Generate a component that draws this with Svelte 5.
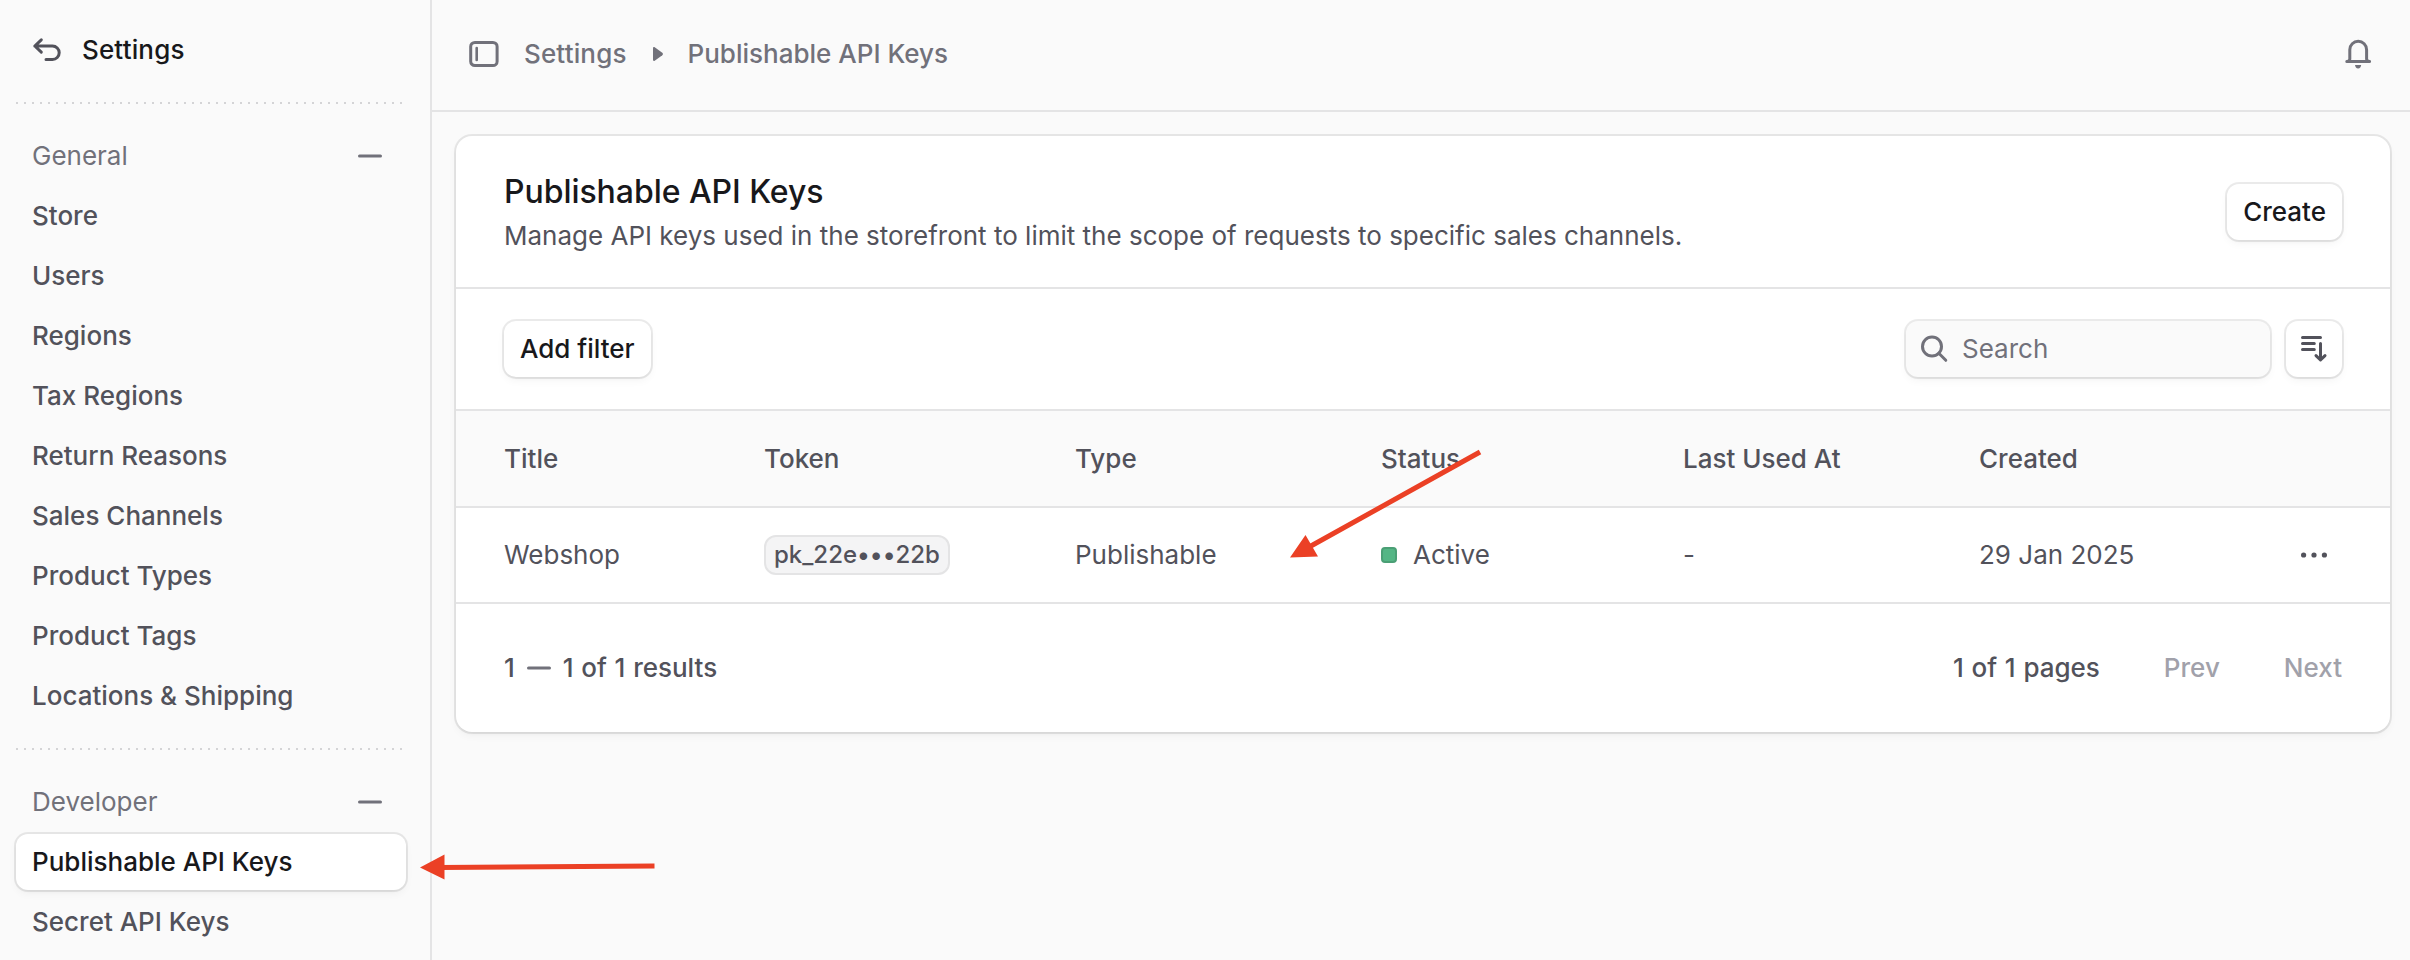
<script>
	const general = [
		"Store",
		"Users",
		"Regions",
		"Tax Regions",
		"Return Reasons",
		"Sales Channels",
		"Product Types",
		"Product Tags",
		"Locations & Shipping"
	];
	const developer = ["Publishable API Keys", "Secret API Keys"];

	const groups = [
		{ label: "General", items: general },
		{ label: "Developer", items: developer }
	];

	const columns = ["Title", "Token", "Type", "Status", "Last Used At", "Created"];

	const keys = [
		{
			title: "Webshop",
			token: "pk_22e•••22b",
			type: "Publishable",
			status: "Active",
			lastUsed: "-",
			created: "29 Jan 2025"
		}
	];

	let active = $state("Publishable API Keys");
	let search = $state("");
</script>

<div class="shell">
	<aside class="sidebar">
		<div class="back">
			<svg class="icon" viewBox="0 0 30 30">
				<path d="M9.3 4.800 2.800 11l6.500 6.200M2.800 11h17.700a6.700 6.700 0 0 1 0 13.400H14" />
			</svg>
			<span>Settings</span>
		</div>

		{#each groups as group}
			<div class="divider"></div>
			<nav class="group">
				<div class="group-label">
					<span>{group.label}</span>
					<svg class="icon" viewBox="0 0 30 30"><path d="M4.5 15h21" /></svg>
				</div>
				{#each group.items as item}
					<button
						type="button"
						class="nav-item"
						class:active={item === active}
						onclick={() => (active = item)}
					>
						{item}
					</button>
				{/each}
			</nav>
		{/each}
	</aside>

	<main>
		<header class="topbar">
			<svg class="icon" viewBox="0 0 30 30">
				<rect x="1.7" y="3.4" width="26.4" height="23.2" rx="4.2" />
				<path d="M7.7 9v12" stroke-width="2.600" />
			</svg>
			<div class="crumbs">
				<span>Settings</span>
				<svg class="triangle" viewBox="0 0 10 14">
					<path d="M0 1.200v11.600c0 1 .9 1.500 1.700 1L9.300 8.200c.8-.6.8-1.800 0-2.400L1.700.2C.9-.3 0 .2 0 1.200z" />
				</svg>
				<span>Publishable API Keys</span>
			</div>
			<svg class="icon" viewBox="0 0 30 30">
				<path d="M6.800 20v-9.300a8.400 8.400 0 0 1 16.800 0V20c0 1.200.9 2.200 3 2.500H3.800c2.100-.3 3-1.300 3-2.500z" />
				<path class="solid" d="M12 26h6.200c-.2 2-1.300 3.400-3.100 3.400S12.200 28 12 26z" />
			</svg>
		</header>

		<section class="card">
			<div class="card-head">
				<div>
					<h1>Publishable API Keys</h1>
					<p>Manage API keys used in the storefront to limit the scope of requests to specific sales channels.</p>
				</div>
				<button type="button" class="btn">Create</button>
			</div>

			<div class="toolbar">
				<button type="button" class="btn">Add filter</button>
				<div class="tools">
					<label class="search">
						<svg class="icon" viewBox="0 0 30 30">
							<circle cx="13" cy="12.500" r="9.500" />
							<path d="m19.800 19.300 7 7" />
						</svg>
						<input type="text" placeholder="Search" bind:value={search} />
					</label>
					<button type="button" class="btn square" aria-label="Sort">
						<svg class="icon" viewBox="0 0 30 30">
							<path d="M3.500 3.500h18M3.500 9.500h11.800M3.500 15.500h11.800M21.500 9.500v16M17 21.600l4.500 4.400 4.500-4.400" />
						</svg>
					</button>
				</div>
			</div>

			<div class="row row-head">
				{#each columns as column}
					<span>{column}</span>
				{/each}
			</div>
			{#each keys as key}
				<div class="row">
					<span>{key.title}</span>
					<span class="badge">{key.token}</span>
					<span>{key.type}</span>
					<span class="status"><i class="dot"></i>{key.status}</span>
					<span>{key.lastUsed}</span>
					<span>{key.created}</span>
					<svg class="icon more" viewBox="0 0 30 30">
						<circle cx="4.600" cy="15" r="2.600" />
						<circle cx="15" cy="15" r="2.600" />
						<circle cx="25.400" cy="15" r="2.600" />
					</svg>
				</div>
			{/each}

			<footer class="pager">
				<div class="range">
					<span>1</span>
					<svg class="icon" viewBox="0 0 30 30"><path d="M4.500 15h21" /></svg>
					<span>1 of 1 results</span>
				</div>
				<div class="pages">
					<span>1 of 1 pages</span>
					<button type="button" disabled>Prev</button>
					<button type="button" disabled>Next</button>
				</div>
			</footer>
		</section>
	</main>

	<!-- callout arrows over the page -->
	<svg class="callouts" viewBox="0 0 2410 960">
		<path class="shaft" d="M654.500 866 440 867.500M1480 452 1310 546.500" />
		<path d="M420 867.500l24.500-13v25zM1290 557.500l15.500-22.500 12.500 21.500z" />
	</svg>
</div>

<style>
	:global(body) {
		background: #fafafa;
	}

	.shell {
		--base: #18181b;
		--subtle: #52525b;
		--muted: #71717a;
		--line: #e4e4e5;
		--raised: 0 0 0 2px rgba(0, 0, 0, 0.08), 0 2px 4px -2px rgba(0, 0, 0, 0.08),
			0 4px 8px 0 rgba(0, 0, 0, 0.04);
		position: relative;
		display: flex;
		height: 960px;
		overflow: hidden;
		font-family: Inter, "Liberation Sans", sans-serif;
		font-size: 26px;
		line-height: 40px;
		color: var(--subtle);
	}

	button,
	input {
		padding: 0;
		border: 0;
		background: none;
		font: inherit;
		color: inherit;
	}

	.icon {
		flex: none;
		width: 30px;
		height: 30px;
		fill: none;
		stroke: currentColor;
		stroke-width: 3;
		stroke-linecap: round;
		stroke-linejoin: round;
	}

	.icon .solid {
		fill: currentColor;
		stroke: none;
	}

	.sidebar {
		flex: none;
		box-sizing: border-box;
		width: 432px;
		padding: 0 24px 0 16px;
		border-right: 2px solid var(--line);
	}

	.back {
		display: flex;
		align-items: center;
		gap: 20px;
		height: 100px;
		padding: 0 16px 2px;
		font-weight: 500;
	}

	.back span {
		color: var(--base);
		letter-spacing: 0.15px;
	}

	.divider {
		width: 388px;
		height: 2px;
		background: repeating-linear-gradient(90deg, #d4d4d6 0 2px, transparent 2px 8px);
	}

	.group {
		display: flex;
		flex-direction: column;
		gap: 4px;
		width: 390px;
		padding: 24px 0;
	}

	.group-label {
		display: flex;
		align-items: center;
		justify-content: space-between;
		height: 56px;
		padding: 0 21px 0 16px;
		color: var(--muted);
	}

	.nav-item {
		height: 56px;
		padding: 0 16px;
		border-radius: 12px;
		font-weight: 500;
		text-align: left;
	}

	.nav-item.active {
		background: #fff;
		color: var(--base);
		box-shadow: var(--raised);
	}

	main {
		flex: 1;
		min-width: 0;
	}

	.topbar {
		display: flex;
		align-items: center;
		box-sizing: border-box;
		height: 112px;
		padding: 0 37px 2px;
		border-bottom: 2px solid var(--line);
		color: var(--muted);
		font-weight: 500;
	}

	.crumbs {
		display: flex;
		flex: 1;
		align-items: center;
		margin-left: 25px;
	}

	.crumbs span:first-child {
		letter-spacing: 0.15px;
	}

	.triangle {
		width: 10px;
		height: 14px;
		margin: 0 25px 0 26px;
		fill: currentColor;
	}

	.card {
		margin: 24px 20px 0 24px;
		border-radius: 16px;
		background: #fff;
		box-shadow: var(--raised);
	}

	.card-head {
		display: flex;
		align-items: center;
		justify-content: space-between;
		box-sizing: border-box;
		height: 153px;
		padding: 1px 48px 0;
		border-bottom: 2px solid var(--line);
	}

	h1 {
		margin: 0;
		font-size: 32px;
		font-weight: 500;
		line-height: 48px;
		letter-spacing: -0.05px;
		color: var(--base);
	}

	p {
		margin: 0;
	}

	.btn {
		height: 56px;
		padding: 0 16px;
		border-radius: 12px;
		background: #fff;
		box-shadow: var(--raised);
		color: var(--base);
		font-weight: 500;
	}

	.btn.square {
		display: flex;
		align-items: center;
		justify-content: center;
		width: 56px;
		padding: 0;
		color: var(--subtle);
	}

	.toolbar {
		display: flex;
		justify-content: space-between;
		padding: 32px 48px;
		border-bottom: 2px solid var(--line);
	}

	.tools {
		display: flex;
		gap: 16px;
	}

	.search {
		display: flex;
		align-items: center;
		gap: 13px;
		box-sizing: border-box;
		width: 364px;
		height: 56px;
		padding: 0 13px;
		border-radius: 12px;
		background: #fafafa;
		box-shadow: var(--raised);
		color: var(--muted);
	}

	.search input {
		min-width: 0;
		outline: none;
	}

	.search input::placeholder {
		color: var(--muted);
		opacity: 1;
	}

	.row {
		display: grid;
		grid-template-columns: 260px 311px 306px 302px 296px 1fr auto;
		align-items: center;
		height: 94px;
		padding: 0 61px 0 48px;
		border-bottom: 2px solid var(--line);
	}

	.row-head {
		height: 95px;
		background: #fafafa;
		font-weight: 500;
	}

	.badge {
		justify-self: start;
		box-sizing: border-box;
		height: 40px;
		padding: 0 8px;
		border: 2px solid var(--line);
		border-radius: 12px;
		background: #f4f4f5;
		font-size: 24px;
		font-weight: 500;
		line-height: 36px;
	}

	.status {
		display: flex;
		align-items: center;
		gap: 16px;
	}

	.dot {
		box-sizing: border-box;
		width: 16px;
		height: 16px;
		border: 2px solid #4a9f75;
		border-radius: 4px;
		background: #54b685;
	}

	.more {
		fill: currentColor;
		stroke: none;
	}

	.pager {
		display: flex;
		align-items: center;
		justify-content: space-between;
		height: 128px;
		padding: 0 48px;
		font-weight: 500;
		word-spacing: 0.8px;
	}

	.range,
	.pages {
		display: flex;
		align-items: center;
	}

	.range {
		gap: 9px;
	}

	.range .icon {
		color: var(--muted);
	}

	.pages {
		gap: 64px;
	}

	.pages button {
		color: #a1a1aa;
	}

	.callouts {
		position: absolute;
		inset: 0;
		pointer-events: none;
		fill: #eb4025;
	}

	.shaft {
		stroke: #eb4025;
		stroke-width: 5;
	}
</style>
